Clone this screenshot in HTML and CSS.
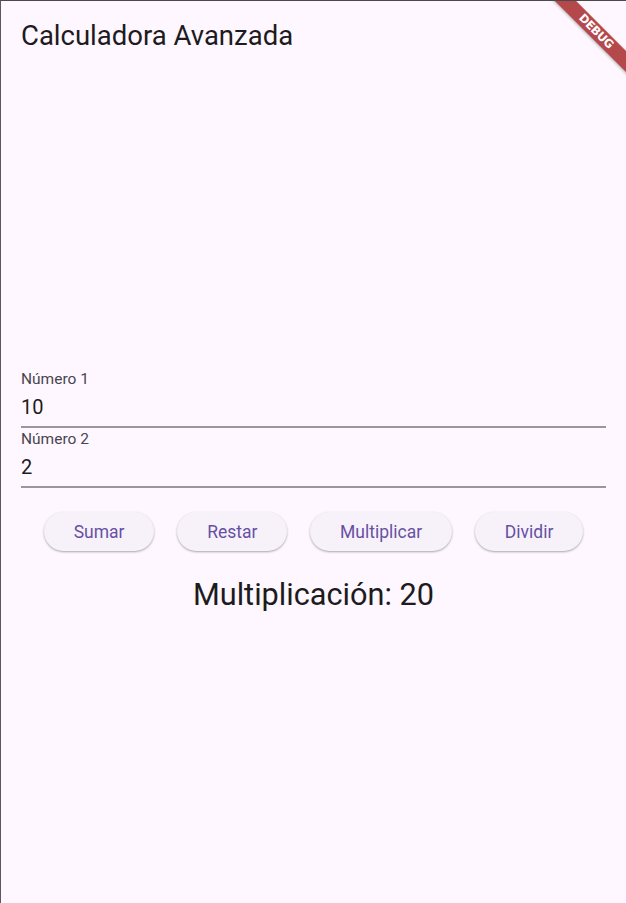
FILE: index.html
```html
<!DOCTYPE html>
<html lang="es">
<head>
<meta charset="utf-8">
<title>Calculadora Avanzada</title>
<link rel="stylesheet" href="styles.css">
</head>
<body>
<div class="screen">
  <header class="appbar">
    <h1 class="title">Calculadora Avanzada</h1>
  </header>
  <main class="content">
    <div class="field">
      <label class="field-label">Número 1</label>
      <div class="field-value">10</div>
    </div>
    <div class="field">
      <label class="field-label">Número 2</label>
      <div class="field-value">2</div>
    </div>
    <div class="buttons">
      <button class="btn">Sumar</button>
      <button class="btn">Restar</button>
      <button class="btn">Multiplicar</button>
      <button class="btn">Dividir</button>
    </div>
    <p class="result">Multiplicación: 20</p>
  </main>
  <div class="banner-wrap"><div class="banner">DEBUG</div></div>
</div>
</body>
</html>
```
FILE: styles.css
```css
html, body {
  margin: 0;
  padding: 0;
  height: 100%;
}
body {
  background: #fef7ff;
  font-family: Roboto, "Noto Sans", sans-serif;
  color: #1d1b20;
}
.screen {
  position: relative;
  box-sizing: border-box;
  height: 903px;
  border-top: 1px solid #4a4a4a;
  border-left: 1px solid #5a5a5a;
  overflow: hidden;
}
.appbar {
  box-sizing: border-box;
  height: 63px;
  padding: 19px 0 0 20px;
}
.title {
  margin: 0;
  font-size: 27.5px;
  line-height: 32px;
  font-weight: 400;
  color: #1d1b20;
}
.content {
  padding: 304px 20px 0 20px;
  display: flex;
  flex-direction: column;
}
.field {
  display: flex;
  flex-direction: column;
  padding-top: 2px;
  border-bottom: 2px solid #9a96a0;
}
.field-label {
  font-size: 15.5px;
  color: #49454f;
  line-height: 18px;
  height: 18px;
}
.field-value {
  font-size: 20px;
  line-height: 24px;
  margin-top: 7px;
  padding-bottom: 7px;
  color: #1d1b20;
}
.buttons {
  display: flex;
  justify-content: space-evenly;
  margin-top: 24px;
}
.btn {
  font-family: Roboto, sans-serif;
  font-size: 17.5px;
  color: #6750a4;
  background: #f7f2fa;
  border: none;
  border-radius: 20px;
  height: 39px;
  padding: 0 30px;
  box-shadow: 0 1px 2px rgba(0,0,0,0.25), 0 1px 3px rgba(0,0,0,0.1);
}
.result {
  margin: 26px 0 0 0;
  text-align: center;
  font-size: 30.7px;
  line-height: 36px;
  color: #1d1b20;
}
.banner-wrap {
  position: absolute;
  top: 0;
  right: 0;
  width: 90px;
  height: 90px;
  overflow: hidden;
}
.banner {
  position: absolute;
  left: 0;
  top: 22.5px;
  width: 120px;
  height: 15px;
  transform: rotate(45deg);
  background: #b5484b;
  color: #fff;
  font-family: "DejaVu Sans", sans-serif;
  font-weight: bold;
  font-size: 11.5px;
  line-height: 15px;
  letter-spacing: -0.3px;
  text-align: center;
  box-shadow: 0 1px 3px rgba(0,0,0,0.3);
}
```
